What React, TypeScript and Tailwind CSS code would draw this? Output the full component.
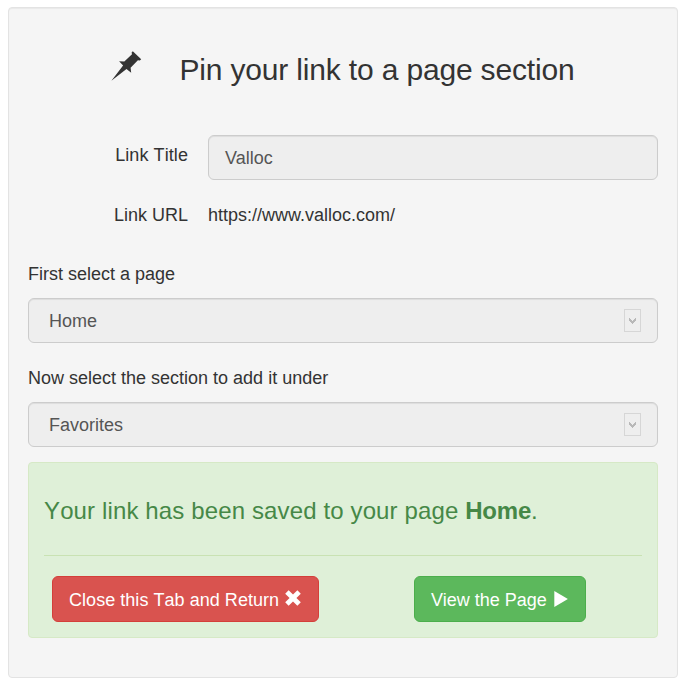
import type { ReactNode } from 'react';

function SelectField({ label, value }: { label: string; value: string }) {
  return (
    <div className="h-[104px]">
      <div className="h-[37px] leading-[26px]">{label}</div>
      <div className="flex h-[45px] items-center justify-between rounded-[6px] border border-[#cccccc] bg-[#eeeeee] pl-5 pr-4 text-[#555555] shadow-[inset_0_1px_1px_rgba(0,0,0,0.075)]">
        <span className="leading-[26px]">{value}</span>
        <span className="flex h-[23px] w-[17px] justify-center border border-[#d6d6d6] pt-2">
          <svg width="7" height="6" viewBox="0 0 7 6" fill="#b8b8b8" shapeRendering="crispEdges">
            <path d="M0 0h1v1h1v1h1v1h1V2h1V1h1V0h1v3H6v1H5v1H4v1H3V5H2V4H1V3H0z" />
          </svg>
        </span>
      </div>
    </div>
  );
}

function Button({ tone, children }: { tone: string; children: ReactNode }) {
  return (
    <button className={`flex h-[46px] items-center rounded-[6px] border pl-4 leading-[26px] text-white ${tone}`}>
      {children}
    </button>
  );
}

export default function App() {
  return (
    <div className="h-[685px] bg-white px-2 pt-[7px] font-['Liberation_Sans',Arial,sans-serif] text-lg text-[#333333]">
      <div className="h-[671px] w-[670px] rounded-[4px] border border-[#e3e3e3] bg-[#f5f5f5] px-[19px] shadow-[inset_0_1px_1px_rgba(0,0,0,0.05)]">
        <div className="flex h-[127px] pt-[43px]">
          <svg className="ml-[83px] h-[30px] w-[31px]" viewBox="0 0 31 30" fill="#333333">
            <path d="M21.8 0.2L30.2 8.3L28.8 9.6L26.9 9.3L19.6 16.8L20.2 21.8L15.5 18L0.4 29.8L12.1 14.5L8.1 10.2L13.3 10.5L21 3.2L20.6 1.5Z" />
          </svg>
          <h2 className="ml-[37.5px] mt-0.5 whitespace-nowrap text-[30px] leading-[33px] tracking-[-0.17px]">Pin your link to a page section</h2>
        </div>

        <div className="flex h-[60px]">
          <div className="w-[160px] pt-[7px] text-right leading-[26px] tracking-[0.08px] [font-kerning:none]">Link Title</div>
          <div className="ml-5 flex h-[45px] w-[450px] items-center rounded-[6px] border border-[#cccccc] bg-[#eeeeee] pl-4 text-[#555555] shadow-[inset_0_1px_1px_rgba(0,0,0,0.075)]">
            Valloc
          </div>
        </div>
        <div className="flex h-[66px] pt-[7px] leading-[26px]">
          <div className="w-[160px] text-right">Link URL</div>
          <div className="ml-5">https://www.valloc.com/</div>
        </div>

        <SelectField label="First select a page" value="Home" />
        <SelectField label="Now select the section to add it under" value="Favorites" />

        <div className="mt-[-7px] h-[176px] rounded-[4px] border border-[#d6e9c6] bg-[#dff0d8] px-[15px] pt-[35px]">
          <h3 className="h-[57px] whitespace-nowrap text-2xl leading-[26px] tracking-[0.13px] text-[#468847] [font-kerning:none]">
            Your link has been saved to your page <strong className="tracking-[-0.2px]">Home</strong>.
          </h3>
          <div className="border-t border-[#c9e2b3]" />
          <div className="flex pl-2 pt-5">
            <Button tone="w-[267px] bg-[#d9534f] border-[#d43f3a]">
              <span className="pt-0.5 tracking-[0.04px] [font-kerning:none]">Close this Tab and Return</span>
              <svg className="mb-0.5 ml-[6px] h-4 w-4" viewBox="0 0 15 15" fill="currentColor">
                <path d="M3.4 0.2L7.5 4.3L11.6 0.2L14.8 3.4L10.7 7.5L14.8 11.6L11.6 14.8L7.5 10.7L3.4 14.8L0.2 11.6L4.3 7.5L0.2 3.4Z" />
              </svg>
            </Button>
            <Button tone="ml-[95px] w-[172px] bg-[#5cb85c] border-[#4cae4c]">
              <span className="pt-0.5">View the Page</span>
              <svg className="ml-[7px] h-4 w-[14px]" viewBox="0 0 14 16" fill="currentColor">
                <path d="M0.3 0.1L13.9 8L0.3 15.9Z" />
              </svg>
            </Button>
          </div>
        </div>
      </div>
    </div>
  );
}
